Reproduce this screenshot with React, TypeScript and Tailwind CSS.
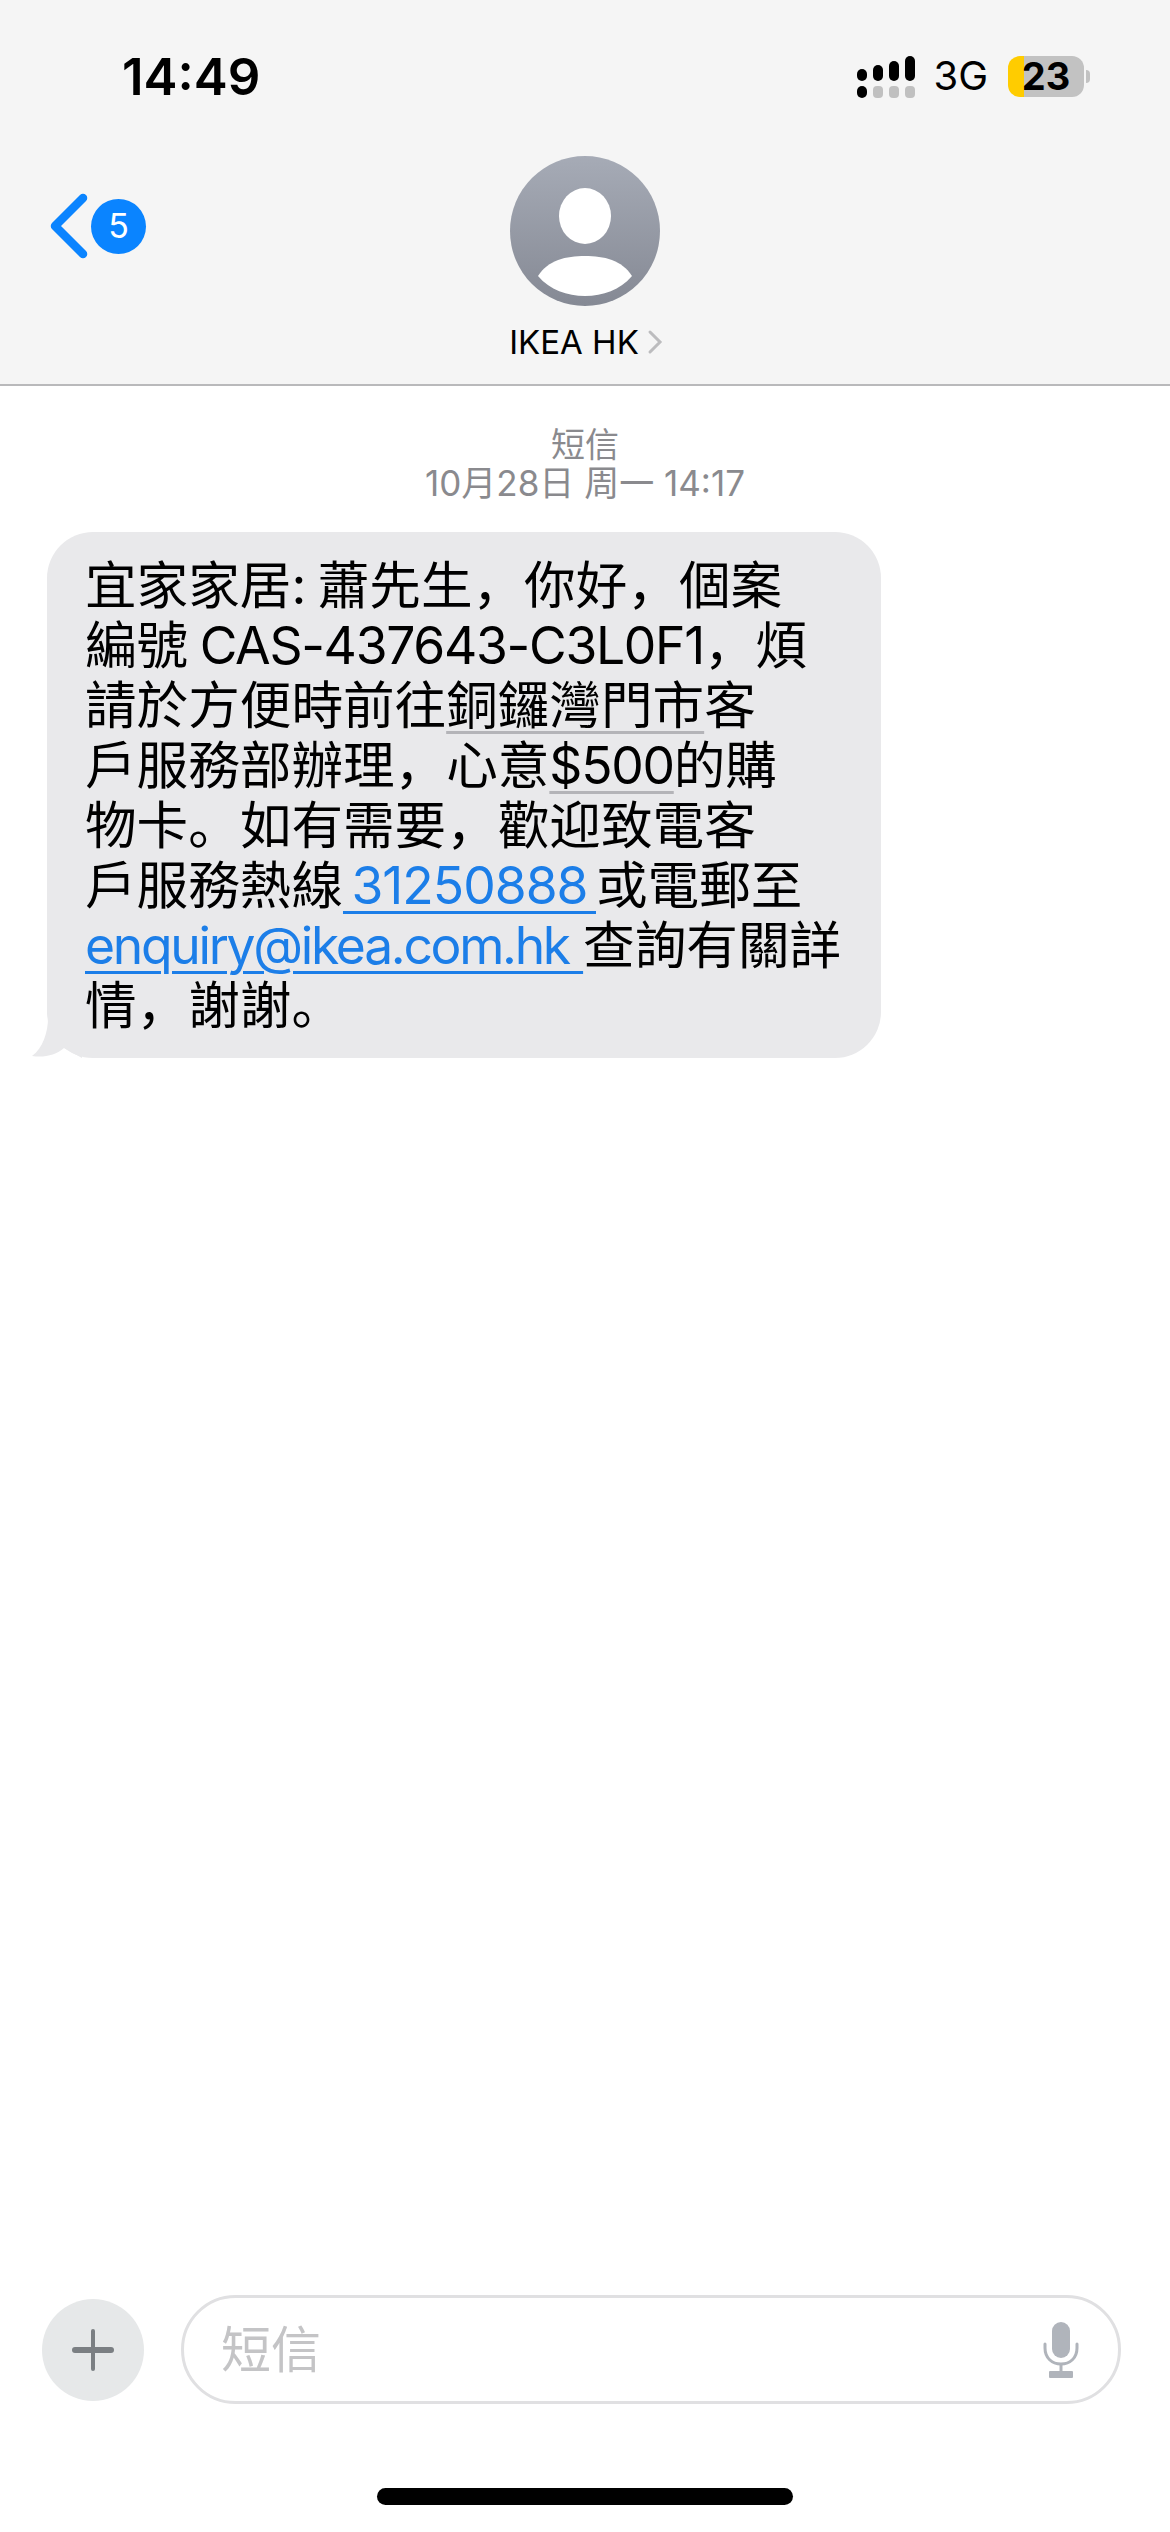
const cjk = { fontFamily: 'Inter, "Noto Sans CJK SC", sans-serif' };

function Signal() {
  return (
    <svg width="60" height="44" viewBox="0 0 60 44">
      <rect x="0" y="13" width="10" height="12" rx="5" fill="#000" />
      <rect x="16" y="9" width="10" height="16" rx="5" fill="#000" />
      <rect x="32" y="5" width="10" height="20" rx="5" fill="#000" />
      <rect x="48" y="0" width="10" height="25" rx="5" fill="#000" />
      <rect x="0" y="30" width="10" height="12" rx="5" fill="#000" />
      <rect x="16" y="30" width="10" height="12" rx="4" fill="#c0c0c0" />
      <rect x="32" y="30" width="10" height="12" rx="4" fill="#c0c0c0" />
      <rect x="48" y="30" width="10" height="12" rx="4" fill="#c0c0c0" />
    </svg>
  );
}

function Avatar() {
  return (
    <svg width="150" height="150" viewBox="0 0 150 150">
      <defs>
        <linearGradient id="av" x1="0" y1="0" x2="0" y2="1">
          <stop offset="0" stopColor="#a6abb6" />
          <stop offset="1" stopColor="#858994" />
        </linearGradient>
      </defs>
      <circle cx="75" cy="75" r="75" fill="url(#av)" />
      <ellipse cx="75" cy="60" rx="26" ry="28" fill="#fff" />
      <path d="M28 120 C38 104 56 100 75 100 C94 100 112 104 122 120 C110 134 93 140 75 140 C57 140 40 134 28 120 Z" fill="#fff" />
    </svg>
  );
}

function Latin({ children }: { children: React.ReactNode }) {
  return <span className="tracking-[-1.3px]">{children}</span>;
}

function Detected({ children }: { children: React.ReactNode }) {
  return <span className="underline decoration-[#b4b4b8] decoration-[3px] underline-offset-[7px]">{children}</span>;
}

export default function App() {
  return (
    <div className="flex h-[2532px] w-[1170px] flex-col overflow-hidden bg-white text-black" style={cjk}>
      <header className="h-[386px] shrink-0 border-b-2 border-[#b9b9bb] bg-[#f5f5f5]">
        <div className="flex h-[156px] items-start justify-between pl-[122px] pr-[80px] pt-[50px]">
          <div className="text-[51px] font-semibold leading-[54px]">14:49</div>
          <div className="flex items-center pt-[6px]">
            <Signal />
            <span className="ml-[16px] -mt-[4px] text-[40px] leading-[44px]">3G</span>
            <div className="-mt-[4px] ml-[20px] flex h-[41px] w-[76px] items-center justify-center rounded-[12px] bg-[linear-gradient(90deg,#ffcc00_0,#ffcc00_16px,#c2c2c2_16px)] text-[38px] font-bold leading-none">23</div>
            <div className="-mt-[4px] ml-[2px] h-[13px] w-[4px] rounded-r-full bg-[#c2c2c2]" />
          </div>
        </div>
        <div className="grid grid-cols-[1fr_auto_1fr]">
          <div className="flex items-center gap-[3px] pb-[66px] pl-[49px]">
            <svg width="39" height="66" viewBox="0 0 39 66">
              <path d="M34 5 L6 33 L34 61" fill="none" stroke="#0a84ff" strokeWidth="8.5" strokeLinecap="round" strokeLinejoin="round" />
            </svg>
            <div className="flex h-[55px] w-[55px] items-center justify-center rounded-full bg-[#0a84ff] text-[34px] leading-none text-white">5</div>
          </div>
          <div className="flex flex-col items-center">
            <Avatar />
            <div className="mt-[16px] flex items-center gap-[8px] pl-[2px] text-[33px] leading-[40px]">
              <span>IKEA HK</span>
              <svg width="16" height="26" viewBox="0 0 16 26">
                <path d="M3 3 L13 13 L3 23" fill="none" stroke="#bcbcbe" strokeWidth="3" strokeLinecap="round" />
              </svg>
            </div>
          </div>
          <div />
        </div>
      </header>

      <main className="flex-1">
        <div className="pt-[39px] text-center text-[35px] leading-[39px] text-[#8a8a8e]">
          <div className="text-[34px]">短信</div>
          <div>10月28日 周一 14:17</div>
        </div>
        <div className="relative ml-[47px] mt-[29px] w-[834px] rounded-[46px] bg-[#e9e9eb] pb-[23px] pl-[38px] pr-[20px] pt-[23px] text-[51.6px] leading-[60px]">
          <svg className="absolute -left-[15px] bottom-0" width="50" height="40" viewBox="0 0 50 40">
            <path d="M16 0 C16 14 11 30 0 38 C12 40 24 37 32 30 L50 40 L50 0 Z" fill="#e9e9eb" />
          </svg>
          <div className="relative whitespace-nowrap">
            <div className="[word-spacing:-3px]">宜家家居: 蕭先生，你好，個案</div>
            <div className="[word-spacing:-3px]">編號 <Latin>CAS-437643-C3L0F1</Latin>，煩</div>
            <div>請於方便時前往<Detected>銅鑼灣門市</Detected>客</div>
            <div>戶服務部辦理，心意<Detected><Latin>$500</Latin></Detected>的購</div>
            <div>物卡。如有需要，歡迎致電客</div>
            <div>戶服務熱線<span className="text-[#1c7ee8] underline decoration-[#1c7ee8] decoration-[3px] underline-offset-[7px] tracking-[-1px] [word-spacing:-5px]"> 31250888 </span>或電郵至</div>
            <div><span className="text-[#1c7ee8] underline decoration-[#1c7ee8] decoration-[3px] underline-offset-[7px] tracking-[-2.3px] [word-spacing:2px]"> enquiry@ikea.com.hk </span>查詢有關詳</div>
            <div>情，謝謝。</div>
          </div>
        </div>
      </main>

      <footer className="shrink-0">
        <div className="flex items-center gap-[37px] pl-[42px] pr-[49px]">
          <div className="flex h-[102px] w-[102px] shrink-0 items-center justify-center rounded-full bg-[#e6e8e9]">
            <svg width="42" height="42" viewBox="0 0 42 42">
              <path d="M21 2 V40" stroke="#7b7f83" strokeWidth="4" strokeLinecap="round" />
              <path d="M3 21 H39" stroke="#7b7f83" strokeWidth="6" strokeLinecap="round" />
            </svg>
          </div>
          <div className="flex h-[109px] flex-1 items-center justify-between rounded-full border-[3px] border-[#e0e0e2] pl-[37px] pr-[39px]">
            <span className="text-[50px] leading-none text-[#c4c4c6]">短信</span>
            <svg width="36" height="56" viewBox="0 0 36 56">
              <rect x="9" y="0" width="18" height="36" rx="9" fill="#b0b4bb" />
              <path d="M2 22 V26 C2 36 9 42 18 42 C27 42 34 36 34 26 V22" fill="none" stroke="#b0b4bb" strokeWidth="3" strokeLinecap="round" />
              <path d="M18 42 V50" stroke="#b0b4bb" strokeWidth="3" />
              <rect x="6" y="49" width="24" height="7" rx="1" fill="#b0b4bb" />
            </svg>
          </div>
        </div>
        <div className="flex justify-center pb-[27px] pt-[84px]">
          <div className="h-[17px] w-[416px] rounded-full bg-black" />
        </div>
      </footer>
    </div>
  );
}
